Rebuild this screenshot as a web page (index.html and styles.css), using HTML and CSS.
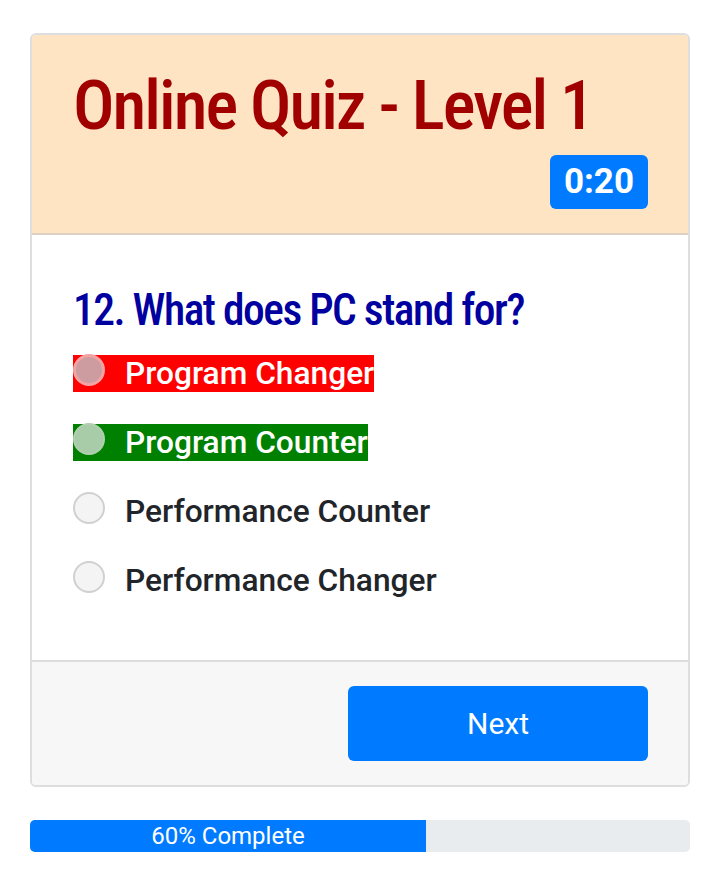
FILE: index.html
```html
<!DOCTYPE html>
<html>
<head>
<meta charset="utf-8">
<link rel="stylesheet" href="styles.css">
</head>
<body>
<div class="page">
  <div class="card">
    <div class="card-header">
      <h1 class="title">Online Quiz - Level 1</h1>
      <div class="timer-row"><span class="timer">0:20</span></div>
    </div>
    <div class="card-body">
      <h2 class="question">12. What does PC stand for?</h2>
      <div class="options">
        <div class="option"><span class="label wrong"><span class="radio"></span><span class="text">Program Changer</span></span></div>
        <div class="option"><span class="label right"><span class="radio"></span><span class="text">Program Counter</span></span></div>
        <div class="option"><span class="label"><span class="radio"></span><span class="text">Performance Counter</span></span></div>
        <div class="option"><span class="label"><span class="radio"></span><span class="text">Performance Changer</span></span></div>
      </div>
    </div>
    <div class="card-footer">
      <button class="next">Next</button>
    </div>
  </div>
  <div class="progress">
    <div class="progress-bar" style="width:60%">60% Complete</div>
  </div>
</div>
</body>
</html>
```
FILE: styles.css
```css
* { box-sizing: border-box; }
body {
  margin: 0;
  background: #ffffff;
  font-family: Roboto, "Liberation Sans", sans-serif;
  color: #212529;
}
.page {
  padding: 33px 30px 0 30px;
}
.card {
  border: 2px solid #dedede;
  border-radius: 6px;
  overflow: hidden;
}
.card-header {
  background: #ffe4c4;
  border-bottom: 2px solid #dcd0c0;
  padding: 31px 40px 24px 41px;
}
.title {
  margin: 0;
  font-family: Roboto, sans-serif;
  font-stretch: 75%;
  font-weight: 480;
  font-size: 69px;
  letter-spacing: -2px;
  line-height: 80px;
  color: #a00000;
}
.timer-row {
  display: flex;
  justify-content: flex-end;
  margin-top: 9px;
}
.timer {
  background: #007bff;
  color: #fff;
  font-weight: 700;
  font-size: 35px;
  line-height: 54px;
  padding: 0 14px;
  border-radius: 6px;
}
.card-body {
  background: #fff;
  padding: 50px 40px 61px 41px;
}
.question {
  margin: 0 0 18px 0;
  font-family: Roboto, sans-serif;
  font-stretch: 75%;
  font-weight: 480;
  font-size: 43.5px;
  letter-spacing: -1.5px;
  line-height: 52px;
  color: #0000a0;
}
.options {
  display: flex;
  flex-direction: column;
  gap: 32px;
}
.option {
  display: flex;
}
.label {
  display: inline-flex;
  align-items: flex-start;
  height: 37px;
}
.label.wrong { background: #ff0000; color: #fff; }
.label.right { background: #008000; color: #fff; }
.radio {
  width: 32px;
  height: 32px;
  border-radius: 50%;
  border: 2px solid #d0d0d0;
  background: #f4f4f4;
  margin: -1px 20px 0 0;
  flex: none;
}
.wrong .radio {
  background: #cc9ca0;
  border: 3px solid #f4a3a3;
}
.right .radio {
  background: #a8cba8;
  border: 2px solid #b0d0b0;
}
.text {
  font-size: 31.7px;
  font-weight: 500;
  line-height: 37px;
  white-space: nowrap;
}
.card-footer {
  background: #f7f7f7;
  border-top: 2px solid #dcdcdc;
  padding: 24px 40px 24px 40px;
  display: flex;
  justify-content: flex-end;
}
.next {
  width: 300px;
  height: 75px;
  border: none;
  border-radius: 6px;
  background: #007bff;
  color: #fff;
  font-family: Roboto, sans-serif;
  font-size: 30px;
  font-weight: 400;
}
.progress {
  margin-top: 33px;
  height: 32px;
  background: #e9ecef;
  border-radius: 5px;
  overflow: hidden;
  display: flex;
}
.progress-bar {
  background: #007bff;
  color: #fff;
  font-size: 24px;
  line-height: 32px;
  text-align: center;
}
```
